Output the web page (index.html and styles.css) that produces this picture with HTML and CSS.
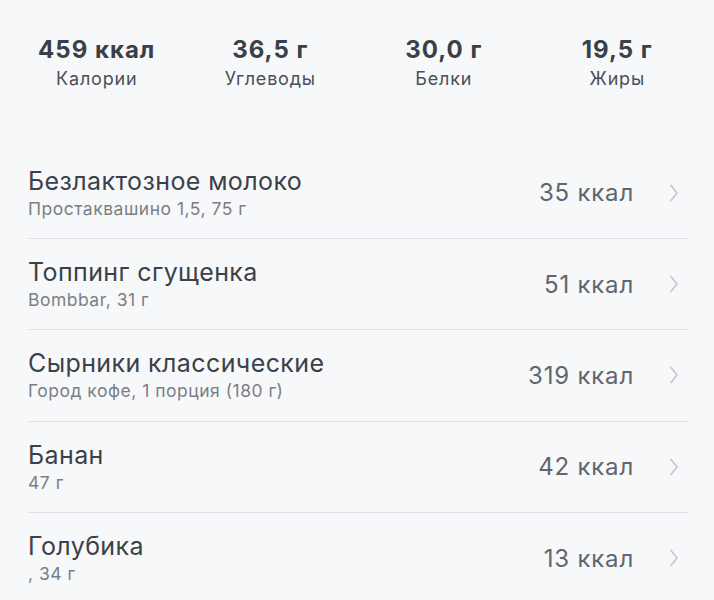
FILE: index.html
```html
<!DOCTYPE html>
<html lang="ru">
<head>
<meta charset="utf-8">
<link rel="stylesheet" href="styles.css">
</head>
<body>
<div class="page">
  <section class="stats">
    <div class="stat"><div class="stat-value">459 ккал</div><div class="stat-label">Калории</div></div>
    <div class="stat"><div class="stat-value">36,5 г</div><div class="stat-label">Углеводы</div></div>
    <div class="stat"><div class="stat-value">30,0 г</div><div class="stat-label">Белки</div></div>
    <div class="stat"><div class="stat-value">19,5 г</div><div class="stat-label">Жиры</div></div>
  </section>
  <ul class="list">
    <li class="row">
      <div class="info"><div class="title">Безлактозное молоко</div><div class="sub">Простаквашино 1,5, 75 г</div></div>
      <div class="kcal">35 ккал</div>
      <svg class="chev" viewBox="0 0 8 18" width="8" height="18"><path d="M1 1.5 L7 9 L1 16.5" fill="none" stroke="#c6c9cd" stroke-width="1.8" stroke-linecap="round" stroke-linejoin="round"/></svg>
    </li>
    <li class="row">
      <div class="info"><div class="title">Топпинг сгущенка</div><div class="sub">Bombbar, 31 г</div></div>
      <div class="kcal">51 ккал</div>
      <svg class="chev" viewBox="0 0 8 18" width="8" height="18"><path d="M1 1.5 L7 9 L1 16.5" fill="none" stroke="#c6c9cd" stroke-width="1.8" stroke-linecap="round" stroke-linejoin="round"/></svg>
    </li>
    <li class="row">
      <div class="info"><div class="title">Сырники классические</div><div class="sub">Город кофе, 1 порция (180 г)</div></div>
      <div class="kcal">319 ккал</div>
      <svg class="chev" viewBox="0 0 8 18" width="8" height="18"><path d="M1 1.5 L7 9 L1 16.5" fill="none" stroke="#c6c9cd" stroke-width="1.8" stroke-linecap="round" stroke-linejoin="round"/></svg>
    </li>
    <li class="row">
      <div class="info"><div class="title">Банан</div><div class="sub">47 г</div></div>
      <div class="kcal">42 ккал</div>
      <svg class="chev" viewBox="0 0 8 18" width="8" height="18"><path d="M1 1.5 L7 9 L1 16.5" fill="none" stroke="#c6c9cd" stroke-width="1.8" stroke-linecap="round" stroke-linejoin="round"/></svg>
    </li>
    <li class="row">
      <div class="info"><div class="title">Голубика</div><div class="sub">, 34 г</div></div>
      <div class="kcal">13 ккал</div>
      <svg class="chev" viewBox="0 0 8 18" width="8" height="18"><path d="M1 1.5 L7 9 L1 16.5" fill="none" stroke="#c6c9cd" stroke-width="1.8" stroke-linecap="round" stroke-linejoin="round"/></svg>
    </li>
  </ul>
</div>
</body>
</html>
```
FILE: styles.css
```css
html, body {
  margin: 0;
  padding: 0;
  background: #f7f8fa;
}
body {
  font-family: "Inter", "Noto Sans", sans-serif;
  color: #3b4148;
}
.page {
  width: 714px;
  height: 600px;
  overflow: hidden;
}
.stats {
  display: grid;
  grid-template-columns: repeat(4, 1fr);
  padding: 35px 10px 0;
  height: 147.5px;
  box-sizing: border-box;
}
.stat {
  display: flex;
  flex-direction: column;
  align-items: center;
}
.stat-value {
  font-size: 24px;
  font-weight: 700;
  line-height: 30px;
  color: #3a4047;
  letter-spacing: 1px;
}
.stat-label {
  font-size: 18px;
  line-height: 22px;
  margin-top: 3px;
  color: #4a5057;
  letter-spacing: 0.8px;
}
.list {
  list-style: none;
  margin: 0;
  padding: 0 26px 0 28px;
}
.row {
  display: flex;
  align-items: center;
  height: 90.4px;
  border-bottom: 1.5px solid #dfe1e4;
}
.info {
  flex: 1;
  display: flex;
  flex-direction: column;
}
.title {
  font-size: 25px;
  line-height: 28px;
  color: #3b4147;
  letter-spacing: 0.4px;
}
.sub {
  font-size: 17.5px;
  line-height: 20px;
  margin-top: 4px;
  color: #7b7f85;
  letter-spacing: 0.5px;
}
.kcal {
  font-size: 24px;
  color: #62666c;
  margin-right: 36px;
  letter-spacing: 0.8px;
}
.chev {
  display: block;
  margin-right: 10px;
}
```
